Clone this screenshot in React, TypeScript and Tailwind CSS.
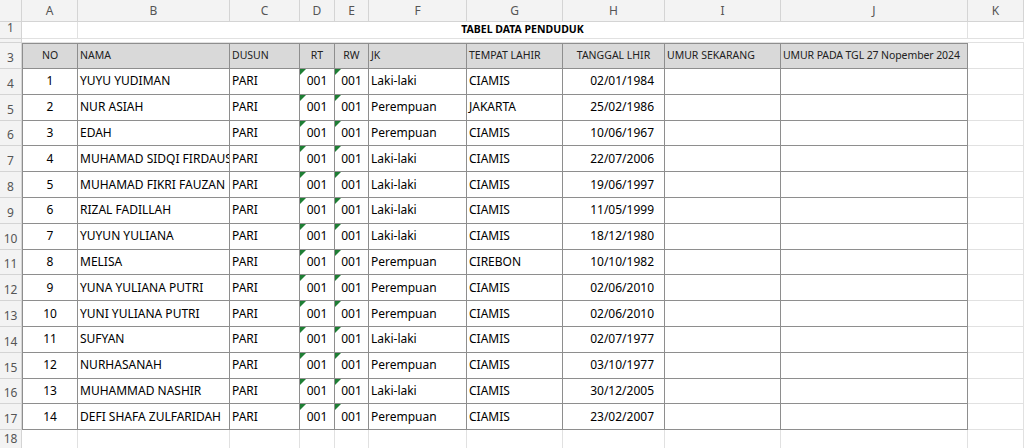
const cols = ['A', 'B', 'C', 'D', 'E', 'F', 'G', 'H', 'I', 'J', 'K']
const grid = 'grid grid-cols-[22px_56px_152px_70px_35px_34px_98px_96px_102px_116px_187px_56px]'

const data = [
  ['1', 'YUYU YUDIMAN', 'Laki-laki', 'CIAMIS', '02/01/1984'],
  ['2', 'NUR ASIAH', 'Perempuan', 'JAKARTA', '25/02/1986'],
  ['3', 'EDAH', 'Perempuan', 'CIAMIS', '10/06/1967'],
  ['4', 'MUHAMAD SIDQI FIRDAUS', 'Laki-laki', 'CIAMIS', '22/07/2006'],
  ['5', 'MUHAMAD FIKRI FAUZAN', 'Laki-laki', 'CIAMIS', '19/06/1997'],
  ['6', 'RIZAL FADILLAH', 'Laki-laki', 'CIAMIS', '11/05/1999'],
  ['7', 'YUYUN YULIANA', 'Laki-laki', 'CIAMIS', '18/12/1980'],
  ['8', 'MELISA', 'Perempuan', 'CIREBON', '10/10/1982'],
  ['9', 'YUNA YULIANA PUTRI', 'Perempuan', 'CIAMIS', '02/06/2010'],
  ['10', 'YUNI YULIANA PUTRI', 'Perempuan', 'CIAMIS', '02/06/2010'],
  ['11', 'SUFYAN', 'Laki-laki', 'CIAMIS', '02/07/1977'],
  ['12', 'NURHASANAH', 'Perempuan', 'CIAMIS', '03/10/1977'],
  ['13', 'MUHAMMAD NASHIR', 'Laki-laki', 'CIAMIS', '30/12/2005'],
  ['14', 'DEFI SHAFA ZULFARIDAH', 'Perempuan', 'CIAMIS', '23/02/2007'],
]

function RowNum({ n, h }: { n: string; h: string }) {
  return (
    <div className={`${h} bg-[#f3f3f3] border-r border-b border-[#d4d4d4] text-[12px] text-[#555] flex items-end justify-center pb-[1px] font-['Noto_Sans']`}>
      {n}
    </div>
  )
}

const cell = 'border-r border-b border-[#8e8e8e] flex items-center px-[2px] overflow-hidden whitespace-nowrap'

function Tri() {
  return <div className="absolute left-0 top-0 w-0 h-0 border-t-[6px] border-r-[6px] border-t-[#1e7e34] border-r-transparent" />
}

export default function App() {
  return (
    <div className="w-[1024px] h-[448px] overflow-hidden bg-white text-black font-['Liberation_Sans']">
      {/* column letters */}
      <div className={`${grid} h-[22px]`}>
        <div className="bg-[#f3f3f3] border-r border-b border-[#d4d4d4]" />
        {cols.map((c) => (
          <div key={c} className="bg-[#f3f3f3] border-r border-b border-[#d4d4d4] text-[12px] text-[#555] flex items-center justify-center font-['Noto_Sans']">
            {c}
          </div>
        ))}
      </div>

      {/* title row */}
      <div className={`${grid} h-[17px]`}>
        <RowNum n="1" h="h-[17px]" />
        <div className="border-r border-b border-[#e1e1e1]" />
        <div className="col-span-9 border-r border-b border-[#e1e1e1] flex items-center justify-center text-[10.5px] font-bold font-['Noto_Sans']">
          TABEL DATA PENDUDUK
        </div>
        <div className="border-r border-b border-[#e1e1e1]" />
      </div>
      <div className={`${grid} h-[4px]`}>
        <div className="bg-[#f3f3f3] border-r border-b border-[#d4d4d4]" />
        <div className="col-span-11 border-b border-[#e1e1e1]" />
      </div>

      {/* header row */}
      <div className={`${grid} h-[26px] text-[10.5px] font-['Noto_Sans'] text-[#222]`}>
        <RowNum n="3" h="h-[26px]" />
        <div className={`${cell} bg-[#d9d9d9] border-t border-l justify-center`}>NO</div>
        <div className={`${cell} bg-[#d9d9d9] border-t`}>NAMA</div>
        <div className={`${cell} bg-[#d9d9d9] border-t`}>DUSUN</div>
        <div className={`${cell} bg-[#d9d9d9] border-t justify-center`}>RT</div>
        <div className={`${cell} bg-[#d9d9d9] border-t justify-center`}>RW</div>
        <div className={`${cell} bg-[#d9d9d9] border-t`}>JK</div>
        <div className={`${cell} bg-[#d9d9d9] border-t`}>TEMPAT LAHIR</div>
        <div className={`${cell} bg-[#d9d9d9] border-t justify-center`}>TANGGAL LHIR</div>
        <div className={`${cell} bg-[#d9d9d9] border-t`}>UMUR SEKARANG</div>
        <div className={`${cell} bg-[#d9d9d9] border-t tracking-[-0.1px]`}>UMUR PADA TGL 27 Nopember 2024</div>
        <div className="border-r border-b border-[#e1e1e1]" />
      </div>

      {data.map((r, i) => (
        <div key={r[0]} className={`${grid} h-[25.8px] text-[12px]`}>
          <RowNum n={String(i + 4)} h="h-[25.8px]" />
          <div className={`${cell} border-l justify-center`}>{r[0]}</div>
          <div className={cell}>{r[1]}</div>
          <div className={cell}>PARI</div>
          <div className={`${cell} relative justify-center`}><Tri />001</div>
          <div className={`${cell} relative justify-center`}><Tri />001</div>
          <div className={cell}>{r[2]}</div>
          <div className={cell}>{r[3]}</div>
          <div className={`${cell} justify-end pr-[10px]`}>{r[4]}</div>
          <div className={cell} />
          <div className={cell} />
          <div className="border-r border-b border-[#e1e1e1]" />
        </div>
      ))}

      <div className={`${grid} h-[20px]`}>
        <RowNum n="18" h="h-[20px]" />
        {cols.map((c) => (
          <div key={c} className="border-r border-b border-[#e1e1e1]" />
        ))}
      </div>
    </div>
  )
}
